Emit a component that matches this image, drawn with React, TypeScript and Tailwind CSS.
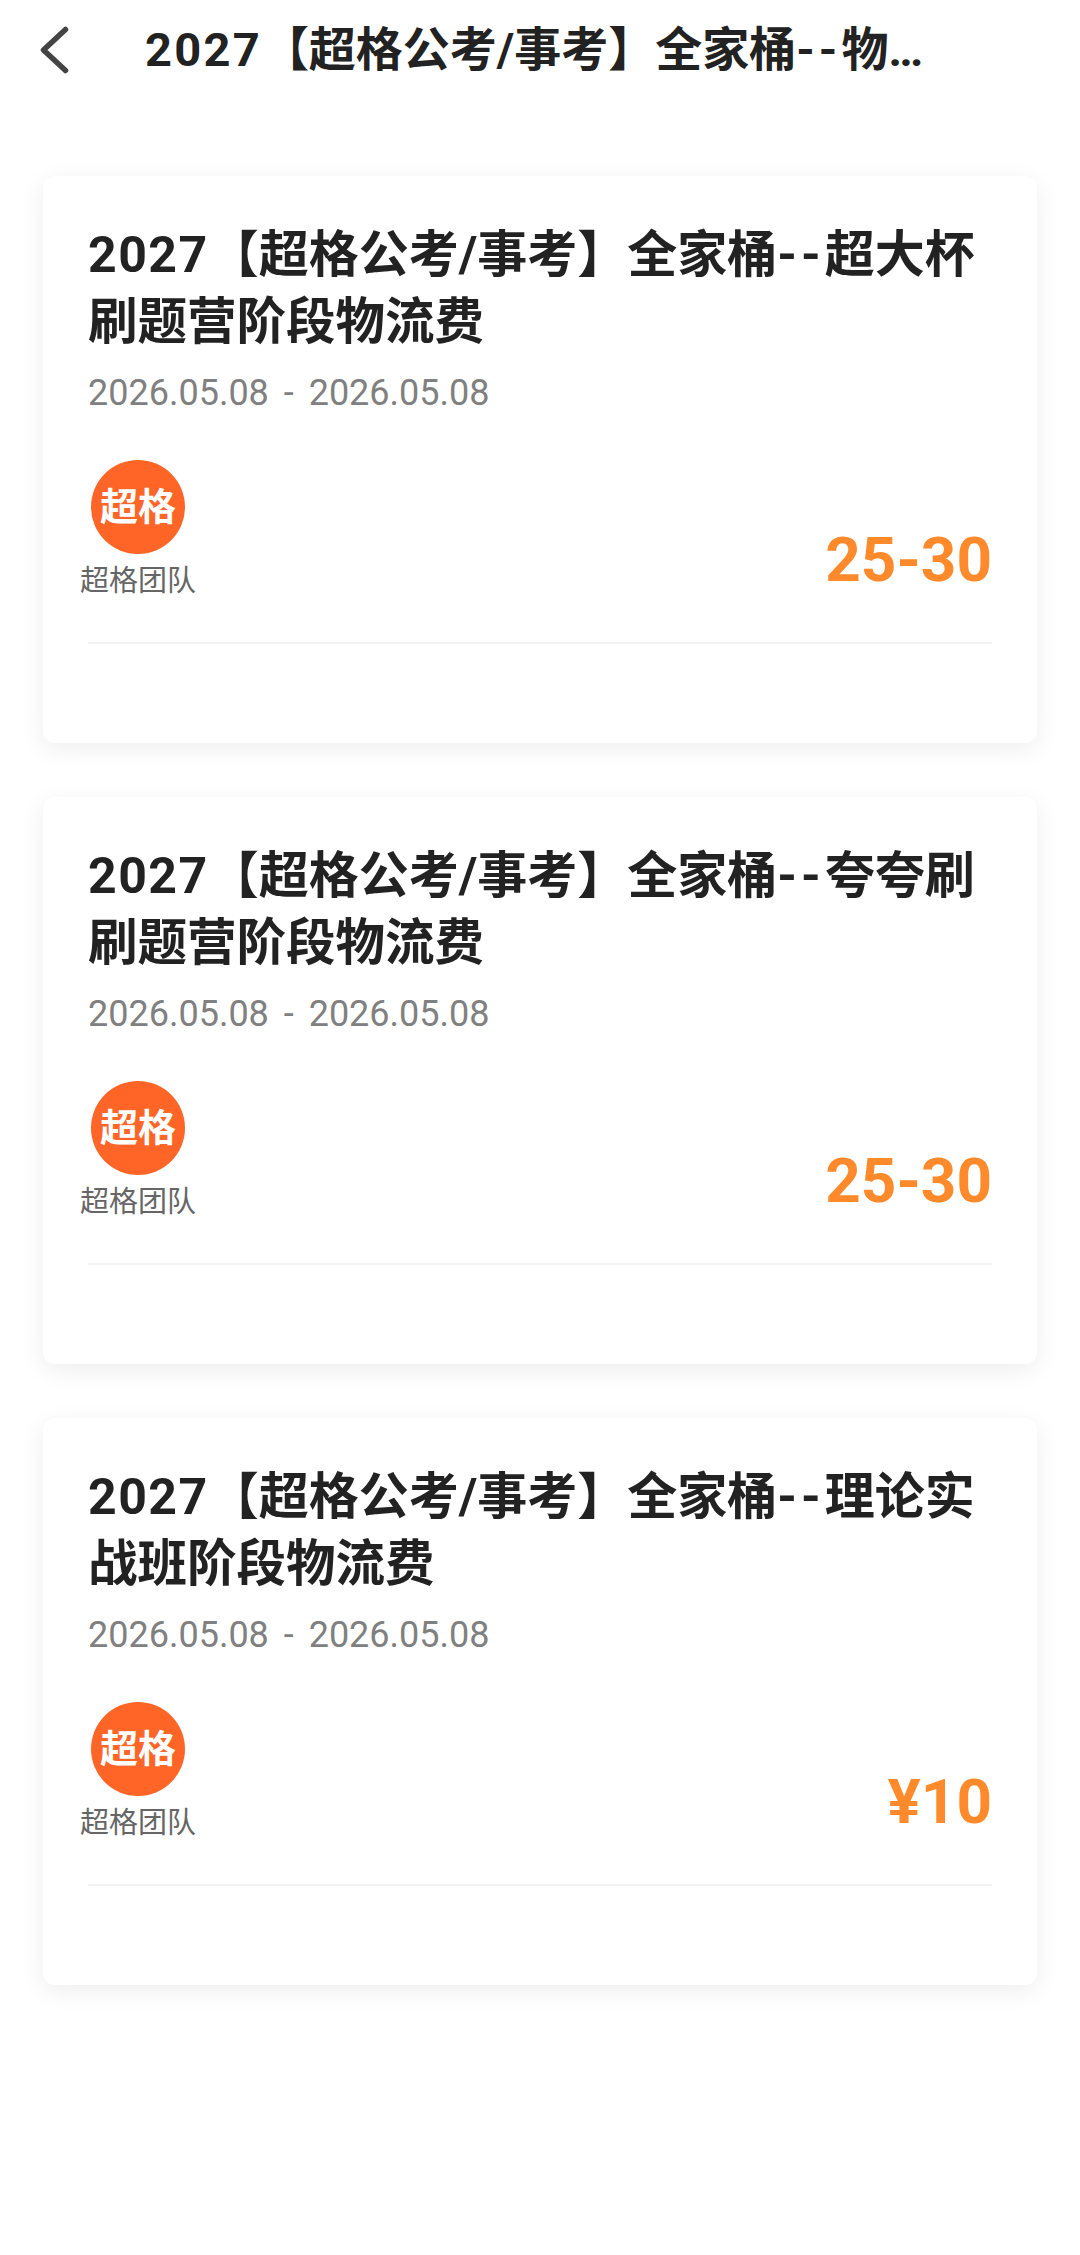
const cards = [
  { head: '超大杯', tail: '刷题营阶段物流费', price: '25-30' },
  { head: '夸夸刷', tail: '刷题营阶段物流费', price: '25-30' },
  { head: '理论实', tail: '战班阶段物流费', price: '¥10' },
];

const font = "font-['Roboto','Noto_Sans_CJK_SC',sans-serif]";

const App = () => {
  return (
    <div className={`w-[1080px] h-[2255px] bg-white overflow-hidden ${font}`}>
      <div className="flex items-center h-[100px] pl-[40px]">
        <svg width="32" height="50" viewBox="0 0 32 50" fill="none" className="shrink-0">
          <path d="M25.5 4.5 L3.5 25 L25.5 45.5" stroke="#444" strokeWidth="5.5" strokeLinecap="round" strokeLinejoin="round" />
        </svg>
        <h1 className="flex ml-[73px] whitespace-nowrap text-[47px] font-bold text-[#222]">
          <span className="tracking-[2.25px]">2027</span>
          <span>【超格公考/事考】全家桶</span>
          <span className="tracking-[4px]">--</span>
          <span>物…</span>
        </h1>
      </div>
      <div className="flex flex-col gap-[54px] mt-[76px] mx-[43px]">
        {cards.map((card) => (
          <div
            key={card.head}
            className="h-[567px] px-[45px] pt-[46px] rounded-[12px] bg-white shadow-[0_6px_24px_rgba(0,0,0,0.07)]"
          >
            <h2 className="text-[50px] leading-[67px] font-bold text-[#222] whitespace-nowrap">
              <div className="flex">
                <span className="tracking-[1.5px]">2027</span>
                <span>【超格公考/事考】全家桶</span>
                <span className="tracking-[4px]">--</span>
                <span>{card.head}</span>
              </div>
              <div className="text-[49.5px]">{card.tail}</div>
            </h2>
            <div className="mt-[13px] text-[36px] leading-[48px] text-[#808080] [word-spacing:6px]">
              2026.05.08 - 2026.05.08
            </div>
            <div className="flex items-end justify-between mt-[43px] h-[140px] border-b-2 border-[#f2f2f2] box-content pb-[42px]">
              <div className="flex flex-col items-center w-[118px] -ml-[9px]">
                <div className="flex items-center justify-center w-[94px] h-[94px] rounded-full bg-[#ff6526] text-[38px] leading-none font-bold text-white">
                  超格
                </div>
                <div className="mt-[8px] text-[29px] leading-[38px] whitespace-nowrap text-[#666]">超格团队</div>
              </div>
              <div className="mb-[4px] text-[62px] leading-[72px] font-bold text-[#ff8a2b]">{card.price}</div>
            </div>
          </div>
        ))}
      </div>
    </div>
  );
};

export default App;
